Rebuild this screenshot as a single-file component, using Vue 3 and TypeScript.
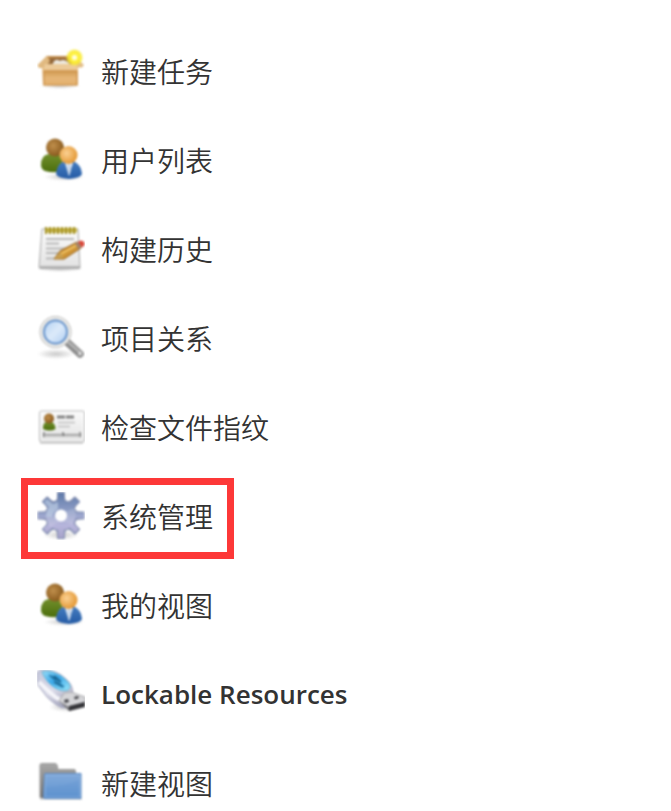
<script setup lang="ts">
type Icon = 'box' | 'users' | 'notepad' | 'search' | 'card' | 'gear' | 'usb' | 'folder'

interface Task {
  label: string
  icon: Icon
  marked?: boolean
  strong?: boolean
}

const tasks: Task[] = [
  { label: '新建任务', icon: 'box' },
  { label: '用户列表', icon: 'users' },
  { label: '构建历史', icon: 'notepad' },
  { label: '项目关系', icon: 'search' },
  { label: '检查文件指纹', icon: 'card' },
  { label: '系统管理', icon: 'gear', marked: true },
  { label: '我的视图', icon: 'users' },
  { label: 'Lockable Resources', icon: 'usb', strong: true },
  { label: '新建视图', icon: 'folder' },
]

const teeth = [0, 45, 90, 135, 180, 225, 270, 315]
const rings = [9, 13, 17, 21, 25, 29, 33, 37]
</script>

<template>
  <svg class="defs" aria-hidden="true">
    <defs>
      <linearGradient id="boxFront" x1="0" y1="0" x2="0" y2="1">
        <stop offset="0" stop-color="#d19a50" /><stop offset="0.5" stop-color="#e6b678" /><stop offset="1" stop-color="#e3b06c" />
      </linearGradient>
      <radialGradient id="glow">
        <stop offset="0" stop-color="#fffbb0" /><stop offset="0.4" stop-color="#fff23c" /><stop offset="0.75" stop-color="#f8e82a" stop-opacity="0.85" /><stop offset="1" stop-color="#fbf06a" stop-opacity="0" />
      </radialGradient>
      <radialGradient id="brown" cx="0.4" cy="0.4" r="0.65">
        <stop offset="0" stop-color="#c08f4c" /><stop offset="1" stop-color="#85561a" />
      </radialGradient>
      <radialGradient id="orange" cx="0.4" cy="0.4" r="0.65">
        <stop offset="0" stop-color="#fbd193" /><stop offset="1" stop-color="#e2942e" />
      </radialGradient>
      <linearGradient id="green" x1="0" y1="0" x2="0" y2="1">
        <stop offset="0" stop-color="#728f2c" /><stop offset="1" stop-color="#4b6e0c" />
      </linearGradient>
      <linearGradient id="blue" x1="0" y1="0" x2="0" y2="1">
        <stop offset="0" stop-color="#447cbf" /><stop offset="1" stop-color="#255ba5" />
      </linearGradient>
      <linearGradient id="paper" x1="0" y1="0" x2="0" y2="1">
        <stop offset="0" stop-color="#fbfbfb" /><stop offset="1" stop-color="#e2e2e2" />
      </linearGradient>
      <linearGradient id="lens" x1="0" y1="0" x2="1" y2="1">
        <stop offset="0" stop-color="#a9cbee" /><stop offset="0.5" stop-color="#dceafa" /><stop offset="1" stop-color="#a4c6ee" />
      </linearGradient>
      <radialGradient id="shade">
        <stop offset="0" stop-color="#777" stop-opacity="0.4" /><stop offset="1" stop-color="#777" stop-opacity="0" />
      </radialGradient>
      <linearGradient id="steel" x1="0" y1="0" x2="0" y2="48" gradientUnits="userSpaceOnUse">
        <stop offset="0" stop-color="#5c78a8" /><stop offset="0.4" stop-color="#8f9ec6" /><stop offset="0.7" stop-color="#b7b5dc" /><stop offset="1" stop-color="#a3a0c6" />
      </linearGradient>
      <linearGradient id="shell" x1="0" y1="0" x2="0.6" y2="1">
        <stop offset="0" stop-color="#c5c8dc" /><stop offset="0.6" stop-color="#dadae8" /><stop offset="1" stop-color="#a5a6bd" />
      </linearGradient>
      <linearGradient id="label" x1="0" y1="0" x2="1" y2="1">
        <stop offset="0" stop-color="#9fe0f8" /><stop offset="0.45" stop-color="#3aa8ea" /><stop offset="1" stop-color="#9de9fb" />
      </linearGradient>
      <linearGradient id="folderBack" x1="0" y1="0" x2="0" y2="1">
        <stop offset="0" stop-color="#a8a8a8" /><stop offset="1" stop-color="#707070" />
      </linearGradient>
      <linearGradient id="folderFront" x1="0" y1="0" x2="0" y2="1">
        <stop offset="0" stop-color="#82aadb" /><stop offset="1" stop-color="#5f94d0" />
      </linearGradient>
    </defs>
  </svg>

  <nav class="tasks" aria-label="任务">
    <ul class="list">
      <li v-for="task in tasks" :key="task.label">
        <a href="#" class="task" :class="{ marked: task.marked, strong: task.strong }">
          <svg class="icon" viewBox="0 0 48 48" aria-hidden="true">
            <g class="art">
              <g v-if="task.icon === 'box'">
                <ellipse cx="23" cy="39" rx="20" ry="3" fill="url(#shade)" />
                <path d="M10 9H37L42 20H5Z" fill="#c08a48" />
                <path d="M13 11H34L36 17H11Z" fill="#94683a" />
                <path d="M16 16q2-4 5-3l2 1q3-2 6 0l3 2v1H16Z" fill="#eeeae0" />
                <path d="M5 17H41V38.500H6Z" fill="#e2b272" />
                <path d="M10 8.500L0.500 18L2 21H6L13 14.500Z" fill="#e0b980" />
                <path d="M37 8.500L47 18L45 20.500H40L34 14.500Z" fill="#e3bd86" />
                <path d="M8 17H39L41 23H6Z" fill="#ecca98" />
                <path d="M7 24H40V38H7Z" fill="url(#boxFront)" stroke="#c98f4a" />
                <circle cx="37.500" cy="10.500" r="9" fill="url(#glow)" />
                <circle cx="37.500" cy="10.500" r="2.500" fill="#fffde0" />
              </g>
              <g v-else-if="task.icon === 'users'">
                <ellipse cx="27" cy="41" rx="20" ry="4" fill="url(#shade)" />
                <path d="M4 29Q4 19 12 18H24L27 34Q19 38 8 35Q4 33 4 29Z" fill="url(#green)" />
                <circle cx="18" cy="11.500" r="9" fill="url(#brown)" />
                <path d="M19 38Q20 28 26 26H38Q44 29 45 38Q44 42 32 43Q20 42 19 38Z" fill="url(#blue)" />
                <path d="M28 27H36L32 40Z" fill="#e3ebf5" />
                <path d="M31 28h2l1 6-2 6L31 35Z" fill="#c3d3e7" />
                <circle cx="31.500" cy="19" r="9" fill="url(#orange)" />
              </g>
              <g v-else-if="task.icon === 'notepad'">
                <ellipse cx="23" cy="44" rx="23" ry="3" fill="url(#shade)" />
                <path d="M5 4H41L43 42Q43 43.500 42 43.500H4Q2 43.500 2 42Z" fill="url(#paper)" stroke="#a8a8a8" />
                <path d="M3 42H43" stroke="#a5a5a5" stroke-width="1.500" />
                <path d="M8 3H40V7.500H8Z" fill="#cdbd54" />
                <path v-for="x in rings" :key="x" :d="`M${x} 2V9`" stroke="#a08d1e" stroke-width="2" />
                <path d="M9 14H37M9 18.500H22M9 23.500H31M9 28H23M9 33.500H18" stroke="#b8b8b8" stroke-width="1.800" />
                <path d="M17 34L23 26L40 17L44 23L27 34Z" fill="#cf9537" stroke="#94601b" />
                <path d="M24 29L40 20" stroke="#f0c468" stroke-width="2" />
                <path d="M17 34L23 27L27 33Z" fill="#c9a052" />
                <path d="M38 18.500L41 16.500L45.500 22L41.500 24.500Z" fill="#a3846a" />
                <path d="M41 17Q44 14 47 17Q49 20 45 22.500Z" fill="#d9483a" />
              </g>
              <g v-else-if="task.icon === 'search'">
                <ellipse cx="19" cy="40" rx="19" ry="5" fill="url(#shade)" />
                <path d="M30 28L43 40" stroke="#8b8b8b" stroke-width="7.500" stroke-linecap="round" />
                <path d="M31 28L44 39.500" stroke="#b5b5b5" stroke-width="2.500" stroke-linecap="round" />
                <circle cx="43" cy="39.500" r="2" fill="#d6d6d6" />
                <circle cx="18.500" cy="18" r="14" fill="url(#lens)" stroke="#b5b5b5" stroke-width="4" />
                <circle cx="18.500" cy="18" r="14" fill="none" stroke="#ececea" stroke-width="2.500" />
                <circle cx="18.500" cy="18" r="11.500" fill="none" stroke="#6f9bd2" stroke-width="2" />
              </g>
              <g v-else-if="task.icon === 'card'">
                <path d="M3 40H46" stroke="#bbb" stroke-width="2" opacity="0.6" />
                <rect x="2.500" y="8" width="45" height="31" rx="2" fill="url(#paper)" stroke="#b8b8b8" />
                <rect x="4" y="9.500" width="42" height="28" rx="1" fill="none" stroke="#fff" />
                <path d="M6 25Q6 20 9 19H15Q18.500 21 18.500 26Q13 29 6 26Z" fill="url(#green)" />
                <circle cx="12" cy="15.500" r="5" fill="url(#brown)" />
                <path d="M20 14H38" stroke="#828282" stroke-width="3" stroke-dasharray="8 1" />
                <path d="M21 19.500H38M21 23.500H33" stroke="#bebebe" stroke-width="1.300" />
                <path d="M6 32H44" stroke="#8c8c8c" stroke-width="2.400" stroke-dasharray="2 1" />
                <path d="M7 29V34M26 29V33M43 29V34" stroke="#777" stroke-width="1.400" />
              </g>
              <g v-else-if="task.icon === 'gear'">
                <ellipse cx="24" cy="43" rx="18" ry="5" fill="url(#shade)" />
                <mask id="gearHole">
                  <rect width="48" height="48" fill="#fff" />
                  <circle cx="24" cy="23.500" r="6" fill="#000" />
                </mask>
                <g mask="url(#gearHole)">
                  <g fill="#7f8bae" stroke="#7f8bae" stroke-width="2" stroke-linejoin="round">
                    <circle cx="24" cy="23.500" r="15" />
                    <path v-for="angle in teeth" :key="angle" d="M19 11Q21.500 8 21 1H27Q26.500 8 29 11Z" :transform="`rotate(${angle} 24 23.500)`" />
                  </g>
                  <circle cx="24" cy="23.500" r="15" fill="url(#steel)" />
                  <path d="M21 1H27V10H21ZM21 37H27V46H21ZM1 20.500H11V26.500H1ZM37 20.500H47V26.500H37Z" fill="url(#steel)" />
                  <path d="M10 6L16 12L12 16L6 10ZM38 6L42 10L36 16L32 12ZM6 37L12 31L16 35L10 41ZM36 31L42 37L38 41L32 35Z" fill="url(#steel)" />
                  <path d="M9 25Q17 26 24 22Q32 18 38 16L39 24L35 33Q24 26 14 35Q8 30 9 25Z" fill="#fff" opacity="0.15" />
                  <path d="M7 10L10 7L16 12L21 10V17Q17 18 15 25H9Q9 19 12 15Z" fill="#cfe0f0" opacity="0.5" />
                </g>
              </g>
              <g v-else-if="task.icon === 'usb'">
                <ellipse cx="29" cy="37" rx="17" ry="5" fill="url(#shade)" />
                <path d="M0.500 2Q1 0 7 0Q20 0 29 9Q36 15 36 24Q34 38 26 38Q19 36 10 27L1 15Q0 9 0.500 2Z" fill="url(#shell)" stroke="#a5a7c0" />
                <path d="M2 12Q10 20 16 25Q21 30 27 30" fill="none" stroke="#f5f5fa" stroke-width="4" />
                <path d="M5 2Q9 0 16 2Q25 5 31 12Q35 17 31 20Q26 22 18 18Q9 12 5 2Z" fill="url(#label)" stroke="#66b7d9" />
                <path d="M14 6L19 10M17 6L24 12M17 12L26 17" stroke="#19638f" stroke-width="2" />
                <path d="M12 5L27 17" stroke="#2379aa" stroke-width="1.500" />
                <path d="M23 32L32 23L48 27V36L32 41Z" fill="#77777b" />
                <path d="M22 31L27 23L34 22L48 27V32L32 37Z" fill="#d5d5d8" stroke="#aaaaad" />
                <path d="M27 30L31 29L32 32L28 33ZM37 27L41 26L42 28L38 29.500Z" fill="#444449" />
                <path d="M32 36L48 32V37L32 41Z" fill="#343438" />
              </g>
              <g v-else>
                <path d="M3 40H45" stroke="#999" stroke-width="2" opacity="0.3" />
                <path d="M3 38V6Q3 4.500 4.500 4.500H18Q19.500 4.500 20 6L21 10.500H37Q38.500 10.500 38.500 12V39H4Q3 39 3 38Z" fill="url(#folderBack)" stroke="#9a9a9a" />
                <path d="M8 14.500H44V39.500H8Q6.500 39.500 6.500 38L7.500 15Z" fill="url(#folderFront)" stroke="#5785bd" />
                <path d="M8.500 16H43V38H8Z" fill="none" stroke="#9abde6" opacity="0.6" />
                <path d="M9 28Q26 28 42 21V38H9Z" fill="#4e86c9" opacity="0.15" />
              </g>
            </g>
          </svg>
          <span>{{ task.label }}</span>
        </a>
      </li>
    </ul>
  </nav>
</template>

<style>
body {
  margin: 0;
  background: #fff;
}
</style>

<style scoped>
.defs {
  position: absolute;
  width: 0;
  height: 0;
}

.tasks {
  padding: 47px 37px 4px;
  color: #333;
  font-family: "Noto Sans CJK SC", sans-serif;
  font-size: 28px;
  line-height: 48px;
}

.list {
  display: flex;
  flex-direction: column;
  gap: 41px;
  margin: 0;
  padding: 0;
  list-style: none;
}

.list li {
  display: flex;
}

.task {
  position: relative;
  display: flex;
  align-items: center;
  gap: 16px;
  color: inherit;
  font-weight: 350;
  text-decoration: none;
  white-space: nowrap;
}

.task.strong {
  font-family: "Open Sans", sans-serif;
  font-size: 26px;
  font-weight: 600;
}

.task.marked::after {
  content: "";
  position: absolute;
  inset: -14px -21px -19px -16px;
  border: 7px solid #fd3838;
  pointer-events: none;
}

.icon {
  flex: none;
  width: 48px;
  height: 48px;
}

.art {
  filter: blur(1px);
}
</style>
